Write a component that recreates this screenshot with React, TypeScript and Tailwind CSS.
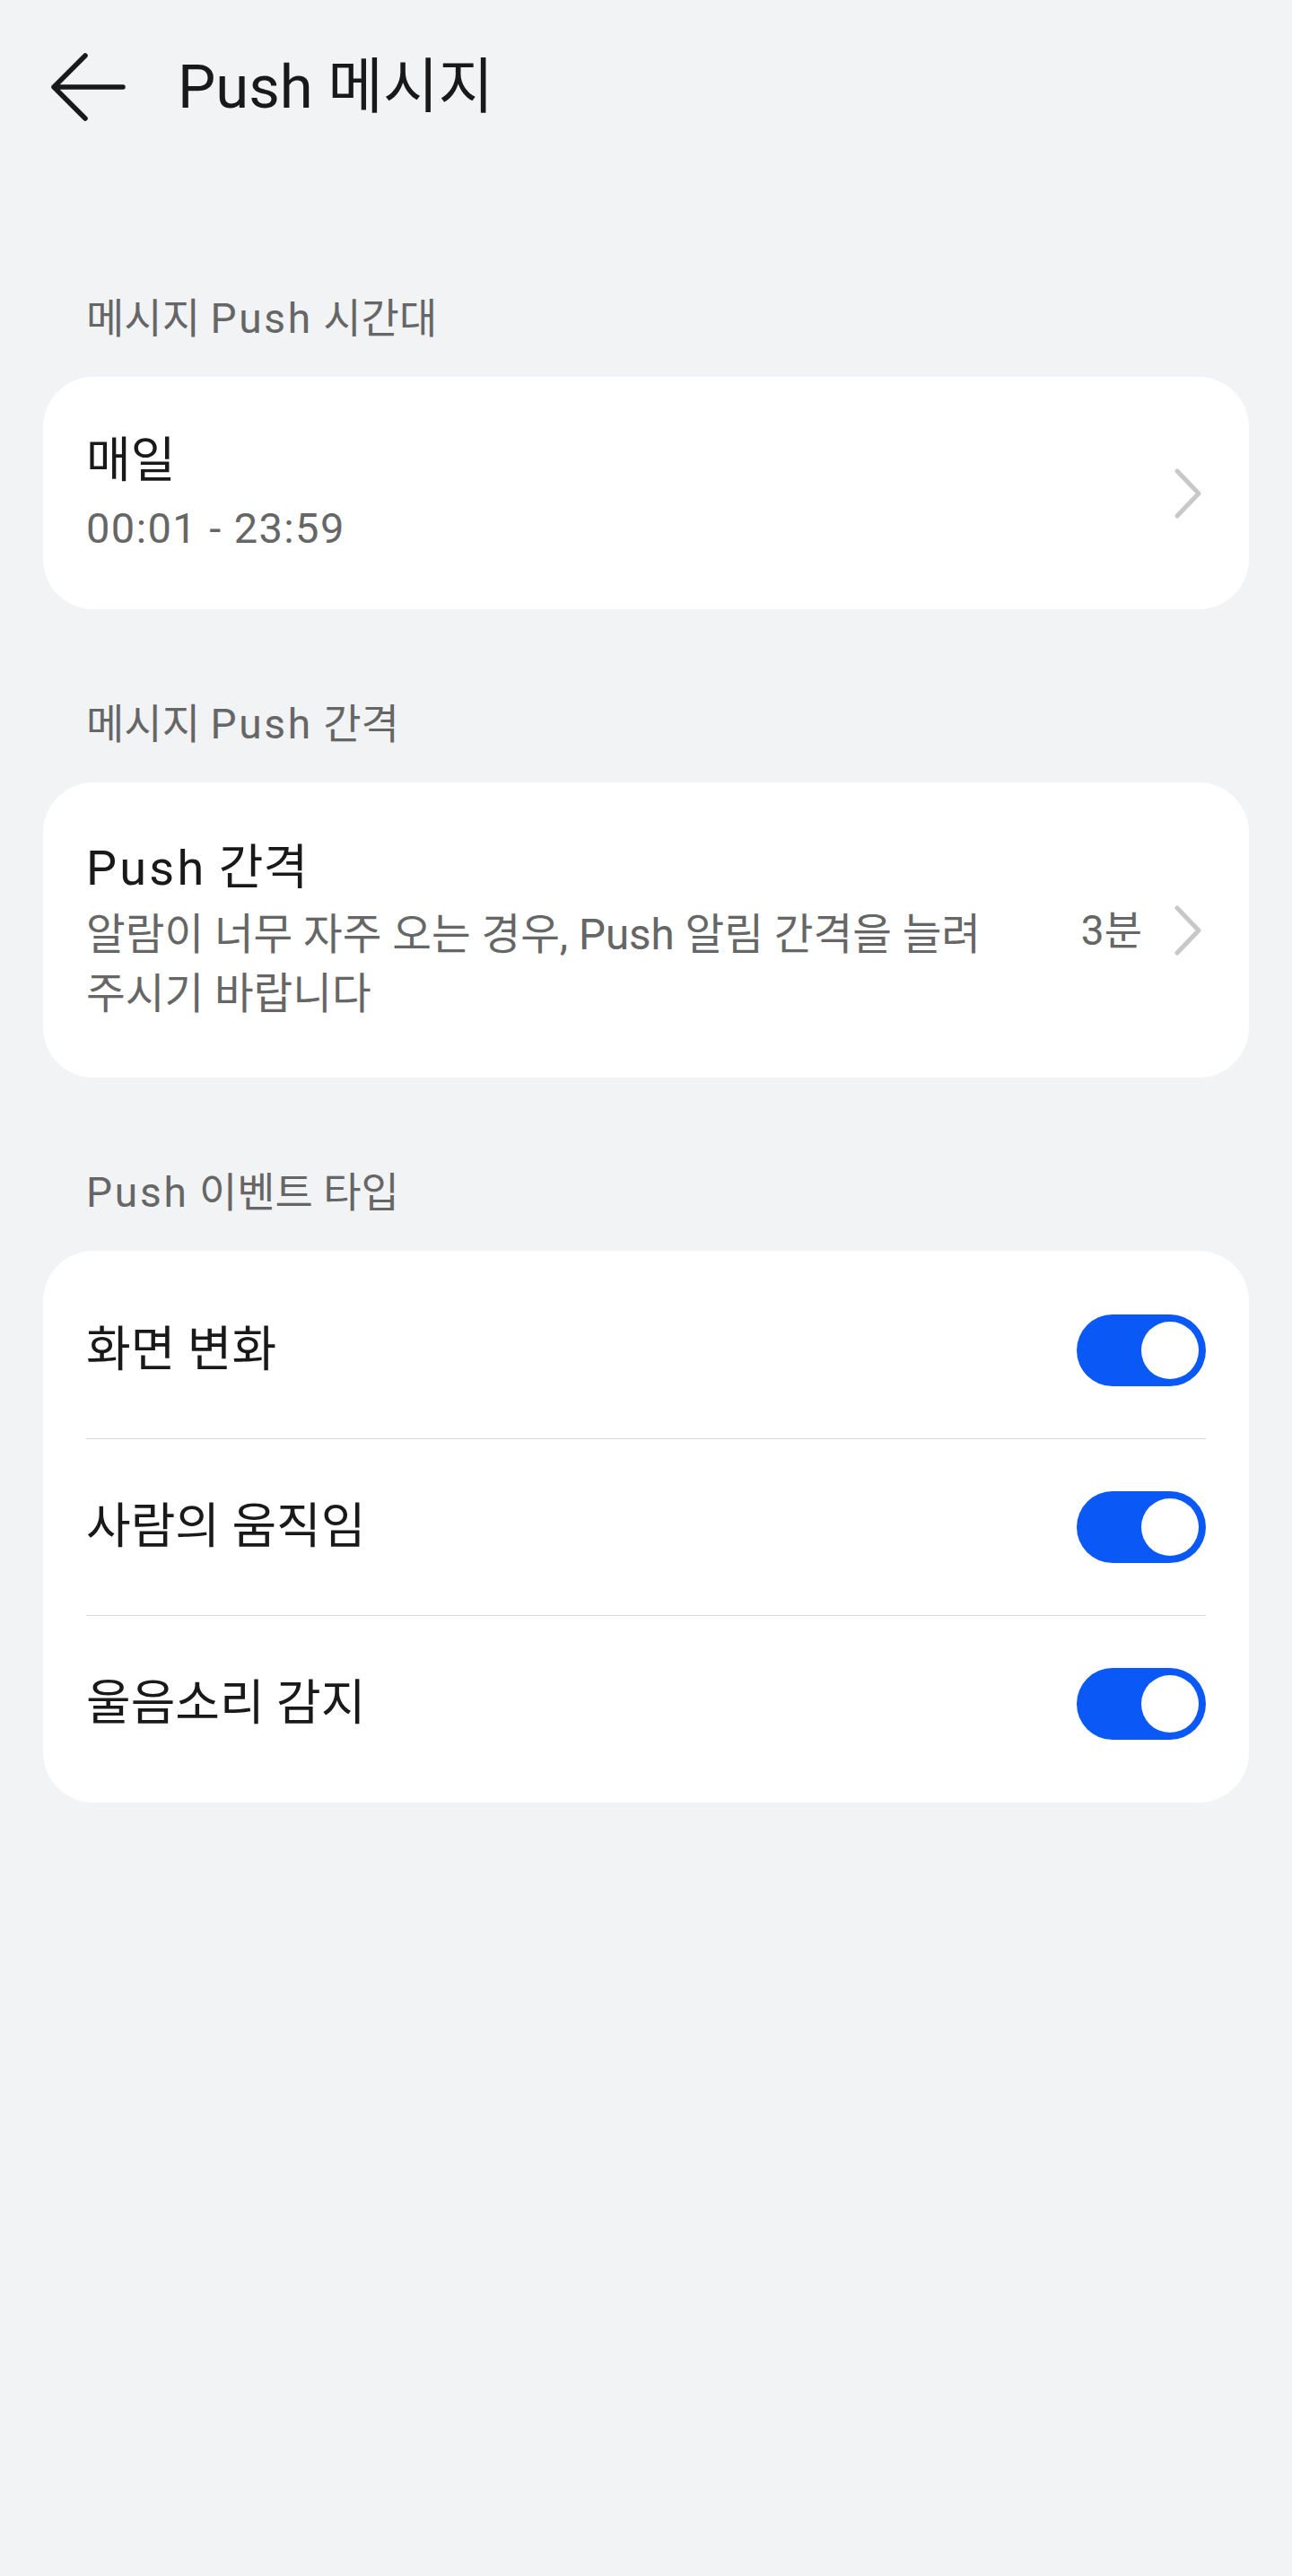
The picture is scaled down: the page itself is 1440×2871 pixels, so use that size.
const font = {
  fontFamily: '"Roboto", "Noto Sans CJK KR", sans-serif',
};

const Chevron = () => (
  <svg width="36" height="60" viewBox="0 0 36 60" fill="none">
    <polyline
      points="4,5 28,30 4,55"
      stroke="#c8c8c8"
      strokeWidth="5"
      strokeLinecap="round"
      strokeLinejoin="round"
    />
  </svg>
);

const Toggle = () => (
  <div className="flex h-[80px] w-[144px] shrink-0 items-center justify-end rounded-full bg-[#0a59f7] p-[8px]">
    <div className="h-[64px] w-[64px] rounded-full bg-white" />
  </div>
);

// latin runs come out a bit narrower than on the device, widen them slightly
const Latin = ({ children }: { children: React.ReactNode }) => (
  <span className="tracking-[0.06em]">{children}</span>
);

const SectionLabel = ({ children, first }: { children: React.ReactNode; first?: boolean }) => (
  <p
    className={`px-[48px] pb-[35px] text-[46px] leading-[60px] text-[#666666] ${
      first ? "pt-[131px]" : "pt-[98px]"
    }`}
  >
    {children}
  </p>
);

const events = ["화면 변화", "사람의 움직임", "울음소리 감지"];

const App = () => {
  return (
    <div className="min-h-[2871px] w-full bg-[#f1f3f5]" style={font}>
      {/* header */}
      <div className="flex h-[194px] items-center pl-[56px]">
        <svg width="84" height="78" viewBox="0 0 84 78" fill="none">
          <path
            d="M81 39H4M39 4L4 39L39 74"
            stroke="#191919"
            strokeWidth="5.5"
            strokeLinecap="round"
            strokeLinejoin="round"
          />
        </svg>
        <h1 className="ml-[58px] text-[67px] leading-none text-[#191919]">Push 메시지</h1>
      </div>

      <div className="px-[48px]">
        <SectionLabel first>
          메시지 <Latin>Push</Latin> 시간대
        </SectionLabel>
        <div className="flex h-[259px] items-center justify-between rounded-[56px] bg-white px-[48px]">
          <div className="flex flex-col">
            <p className="text-[54px] leading-[70px] text-[#191919]">매일</p>
            <p className="mt-[8px] text-[47px] leading-[64px] tracking-[0.03em] text-[#666666]">
              00:01 - 23:59
            </p>
          </div>
          <Chevron />
        </div>

        <SectionLabel>
          메시지 <Latin>Push</Latin> 간격
        </SectionLabel>
        <div className="flex h-[329px] items-center justify-between rounded-[56px] bg-white px-[48px]">
          <div className="flex max-w-[1060px] flex-col">
            <p className="text-[54px] leading-[70px] text-[#191919]">
              <Latin>Push</Latin> 간격
            </p>
            <p className="mt-[6px] break-keep text-[47.5px] leading-[66px] text-[#666666]">
              알람이 너무 자주 오는 경우, Push 알림 간격을 늘려 주시기 바랍니다
            </p>
          </div>
          <div className="flex items-center gap-[35px]">
            <span className="text-[46px] leading-[64px] text-[#666666]">3분</span>
            <Chevron />
          </div>
        </div>

        <SectionLabel>
          <Latin>Push</Latin> 이벤트 타입
        </SectionLabel>
        <div className="rounded-[56px] bg-white px-[48px] py-[12px]">
          {events.map((label, i) => (
            <div
              key={label}
              className={`flex h-[197px] items-center justify-between ${
                i > 0 ? "border-t border-[#dadada]" : ""
              }`}
            >
              <span className="text-[54px] leading-[70px] text-[#191919]">{label}</span>
              <Toggle />
            </div>
          ))}
        </div>
      </div>
    </div>
  );
};

export default App;
